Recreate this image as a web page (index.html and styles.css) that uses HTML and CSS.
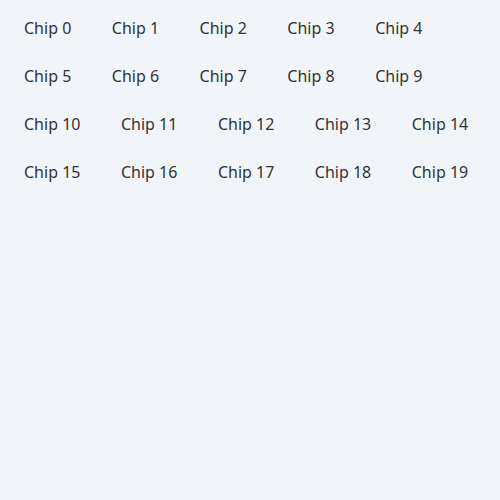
FILE: index.html
```html
<!DOCTYPE html>
<html>
<head>
<meta charset="utf-8">
<link rel="stylesheet" href="styles.css">
</head>
<body>
<div class="chips">
  <span class="chip">Chip 0</span>
  <span class="chip">Chip 1</span>
  <span class="chip">Chip 2</span>
  <span class="chip">Chip 3</span>
  <span class="chip">Chip 4</span>
  <span class="chip">Chip 5</span>
  <span class="chip">Chip 6</span>
  <span class="chip">Chip 7</span>
  <span class="chip">Chip 8</span>
  <span class="chip">Chip 9</span>
  <span class="chip">Chip 10</span>
  <span class="chip">Chip 11</span>
  <span class="chip">Chip 12</span>
  <span class="chip">Chip 13</span>
  <span class="chip">Chip 14</span>
  <span class="chip">Chip 15</span>
  <span class="chip">Chip 16</span>
  <span class="chip">Chip 17</span>
  <span class="chip">Chip 18</span>
  <span class="chip">Chip 19</span>
</div>
</body>
</html>
```
FILE: styles.css
```css
html, body {
  margin: 0;
  background: #f1f5f9;
}
body {
  font-family: "Noto Sans", "Open Sans", sans-serif;
  font-size: 16px;
  color: #333;
  width: 500px;
  height: 500px;
}
.chips {
  display: flex;
  flex-wrap: wrap;
  column-gap: 24.5px;
  row-gap: 12px;
  padding: 10px 16px;
}
.chip {
  padding: 6px 8px;
  line-height: 24px;
}
```
